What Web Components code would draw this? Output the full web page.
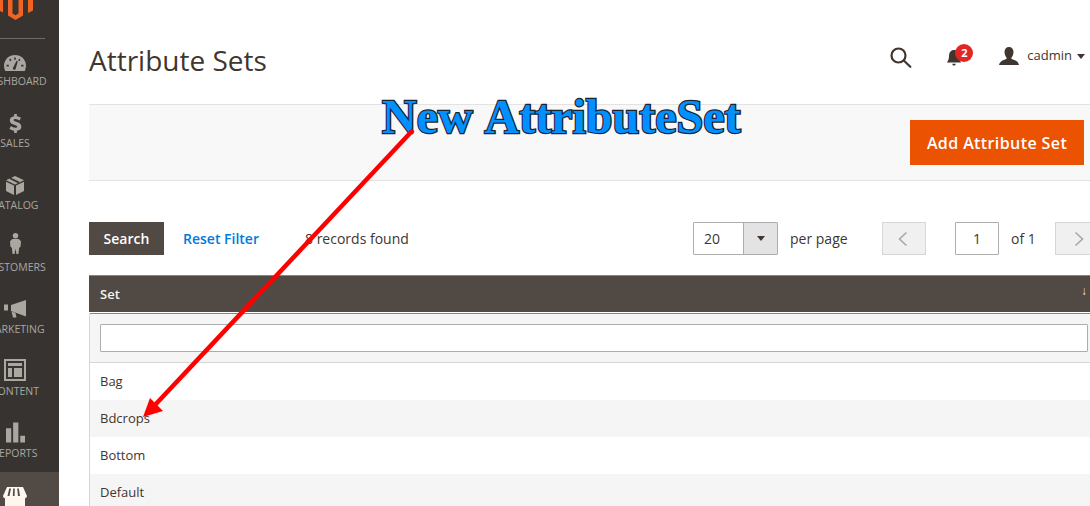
<!DOCTYPE html>
<html lang="en">
<head>
<meta charset="utf-8">
<title>Attribute Sets</title>
<style>
  html, body { margin: 0; height: 506px; overflow: hidden; background: #fff; }
  body { font-family: "Open Sans", sans-serif; color: #41362f; }
  #app { display: flex; width: 1090px; height: 506px; overflow: hidden; position: relative; }
</style>
</head>
<body>
<div id="app">
  <admin-sidebar>
    <nav-item label="DASHBOARD" icon="dashboard"></nav-item>
    <nav-item label="SALES" icon="sales"></nav-item>
    <nav-item label="CATALOG" icon="catalog"></nav-item>
    <nav-item label="CUSTOMERS" icon="customers"></nav-item>
    <nav-item label="MARKETING" icon="marketing"></nav-item>
    <nav-item label="CONTENT" icon="content"></nav-item>
    <nav-item label="REPORTS" icon="reports"></nav-item>
    <nav-item label="STORES" icon="stores" active></nav-item>
  </admin-sidebar>
  <page-main>
    <page-header title="Attribute Sets"></page-header>
    <action-bar label="Add Attribute Set"></action-bar>
    <grid-toolbar></grid-toolbar>
    <data-grid>
      <grid-row>Bag</grid-row>
      <grid-row alt>Bdcrops</grid-row>
      <grid-row>Bottom</grid-row>
      <grid-row alt>Default</grid-row>
    </data-grid>
  </page-main>
  <arrow-note text="New AttributeSet"></arrow-note>
</div>

<script>
const ICONS = {
  dashboard: `<svg width="22" height="16" viewBox="0 0 22 16"><path fill="#aaa6a0" d="M11 0C4.900 0 0 4.700 0 10.600c0 1.900.4 3.700 1.200 5.400h19.600c.8-1.700 1.200-3.500 1.200-5.400C22 4.700 17.100 0 11 0z"/><path fill="#373330" d="M10.200 2.500h1.600v2.200h-1.600zM5 4.500l1.300-1 1.300 1.700-1.300 1zM2.500 9.800h2.300v1.700H2.500zM17.200 9.800h2.300v1.700h-2.300zM15.200 3.700l1.400 1-1.200 1.600-1.300-1zM8.800 13.200l3.800-7.400 1.200.6-2.300 7.800a1.500 1.500 0 0 1-2.700-1z"/></svg>`,
  sales: `<svg width="13" height="19" viewBox="0 0 14 21"><path fill="#aaa6a0" d="M5.500 0h3v2.500c1.800.2 3.300.8 4.500 1.700l-1.500 3C10 6.200 8.500 5.600 7 5.600c-1.300 0-2 .5-2 1.200 0 2 8.500 1.300 8.500 7 0 2.700-1.900 4.400-5 4.800V21h-3v-2.400c-2-.2-3.800-1-5.200-2.200l1.700-3c1.300 1.100 3 1.900 4.700 1.900 1.500 0 2.300-.5 2.300-1.400C9 11.800.7 12.700.7 7c0-2.500 1.800-4.200 4.800-4.500z"/></svg>`,
  catalog: `<svg width="18" height="19" viewBox="0 0 18 19"><path fill="#aaa6a0" d="M9 0l9 4.300-9 4.200L0 4.300zM0 5.800l8 3.800V19l-8-4zM18 5.800l-8 3.800V19l8-4z"/><path fill="none" stroke="#373330" stroke-width="1.800" d="M4 2.300l9 4.300"/></svg>`,
  customers: `<svg width="11" height="23" viewBox="0 0 12 23" style="margin-bottom:2px"><circle cx="6" cy="3" r="3" fill="#aaa6a0"/><path fill="#aaa6a0" d="M2.500 6.500h7L12 9l-.5 6-1.500 1-.8 7H7l-1-6-1 6H2.800L2 16 .5 15 0 9z"/></svg>`,
  marketing: `<svg width="22" height="18" viewBox="0 0 22 18" style="margin-bottom:1px"><path fill="#aaa6a0" d="M22 0v16.500L7 11V5zM0 4.500h4v6H0zM7.500 11.500l4 1.500 1 4.500H9z"/></svg>`,
  content: `<svg width="22" height="22" viewBox="0 0 22 22"><path fill="#aaa6a0" fill-rule="evenodd" d="M0 0h22v22H0zM2 2v18h18V2zM4 4h14v3H4zM4 9h4v9H4zM10 9h8v9h-8z"/></svg>`,
  reports: `<svg width="19" height="21" viewBox="0 0 20 21"><path fill="#aaa6a0" d="M0 6h5.500v15H0zM7.500 0h5.500v21H7.500zM15 14h5v7h-5z"/></svg>`,
  stores: `<svg width="24" height="32" viewBox="0 0 24 32"><path fill="#fff7ee" d="M2 9h20v23H2z"/><path fill="#fff7ee" d="M4 0h16l4 9c0 1.500-1.500 2.500-2.800 2.500S18.300 10.500 18 9c0 1.500-1.600 2.500-3 2.500S12.300 10.500 12 9c-.3 1.500-1.600 2.500-3 2.500S6.300 10.500 6 9c-.3 1.500-1.800 2.500-3.200 2.500S0 10.500 0 9z"/><path fill="#524a45" d="M6.200 1.500h1.800L6.500 9H4.500zM10.200 1.500h1.600L11.600 9H9.800zM15.800 1.500h-1.600L15 9h2z"/></svg>`
};

class AdminSidebar extends HTMLElement {
  constructor() {
    super();
    this.attachShadow({ mode: "open" });
    this.shadowRoot.innerHTML = `
    <style>
      :host {
        display: block;
        flex: 0 0 59px;
        width: 59px;
        height: 506px;
        background: #373330;
        overflow: hidden;
      }
      .logo {
        display: block;
      }
      .rule {
        height: 1px;
        width: 45px;
        margin-top: 18px;
        background: #736963;
      }
      .items {
        display: flex;
        flex-direction: column;
        margin-left: -29px;
        width: 88px;
        padding-top: 9px;
      }
    </style>
    <svg class="logo" width="36" height="20" viewBox="0 0 36 20">
      <path fill="#f26322" d="M0 0h3v12.500L0 11zM8 0h4.500v13.500l3 1.700 3-1.700V0H23v15.500L15.500 20 8 15.500zM28 0h5v10.500L28 13z"/>
    </svg>
    <div class="rule"></div>
    <div class="items"><slot></slot></div>
    `;
  }
}

class NavItem extends HTMLElement {
  constructor() {
    super();
    this.attachShadow({ mode: "open" });
  }

  connectedCallback() {
    const active = this.hasAttribute("active");
    this.shadowRoot.innerHTML = `
    <style>
      :host {
        display: flex;
        flex-direction: column;
        align-items: center;
        height: ${active ? "72px" : "62px"};
        margin-top: ${active ? "-10px" : "0"};
        box-sizing: border-box;
        background: ${active ? "#524a45" : "transparent"};
        padding-top: ${active ? "15px" : "0"};
      }
      .icon {
        height: ${active ? "32px" : "24px"};
        box-sizing: border-box;
        padding-bottom: ${active ? "0" : "1px"};
        display: flex;
        align-items: flex-end;
        justify-content: center;
      }
      .label {
        font: 400 10.500px/14px "Open Sans", sans-serif;
        color: #aaa6a0;
        margin-top: 2px;
        white-space: nowrap;
      }
      svg { display: block; flex: none; }
    </style>
    <div class="icon">${ICONS[this.getAttribute("icon")]}</div>
    <div class="label">${this.getAttribute("label")}</div>
    `;
  }
}

class PageMain extends HTMLElement {
  constructor() {
    super();
    this.attachShadow({ mode: "open" });
    this.shadowRoot.innerHTML = `
    <style>
      :host {
        display: block;
        flex: 0 0 auto;
        width: 1040px;
        margin-left: 30px;
      }
    </style>
    <slot></slot>
    `;
  }
}

class PageHeader extends HTMLElement {
  constructor() {
    super();
    this.attachShadow({ mode: "open" });
  }

  connectedCallback() {
    this.shadowRoot.innerHTML = `
    <style>
      :host {
        display: flex;
        align-items: flex-start;
        height: 104px;
        box-sizing: border-box;
        width: 996px;
      }
      h1 {
        margin: 41px 0 0;
        font: 400 28px/38px "Open Sans", sans-serif;
        color: #41362f;
        flex: 1;
      }
      .actions {
        display: flex;
        align-items: flex-start;
        padding-top: 46px;
      }
      .search { margin: 1px 33px 0 0; display: block; }
      .bell { position: relative; width: 18px; height: 18px; margin: 3px 36px 0 0; }
      .bell svg { display: block; }
      .badge {
        position: absolute;
        left: 10px;
        top: -5px;
        width: 18px;
        height: 18px;
        border-radius: 50%;
        background: #e22626;
        color: #fff;
        font: 700 11px/18px "Open Sans", sans-serif;
        text-align: center;
      }
      .user { display: block; margin: 1px 8px 0 0; }
      .name { margin-top: -1px; font: 400 13px/20px "Open Sans", sans-serif; color: #41362f; }
      .caret {
        width: 0;
        height: 0;
        margin: 8px 0 0 5px;
        border-left: 4px solid transparent;
        border-right: 4px solid transparent;
        border-top: 5px solid #41362f;
      }
    </style>
    <h1>${this.getAttribute("title")}</h1>
    <div class="actions">
      <svg class="search" width="22" height="21" viewBox="0 0 22 21" fill="none" stroke="#41362f" stroke-width="2.200">
        <circle cx="8.500" cy="8.500" r="7"/><path d="M13.800 13.500l6.500 6.300" stroke-linecap="round"/>
      </svg>
      <div class="bell">
        <svg width="18" height="18" viewBox="0 0 18 20"><path fill="#41362f" d="M9 1c3.500 0 5.500 2.800 5.500 6.500 0 4 1 5.500 2.500 7.500H1c1.500-2 2.500-3.500 2.500-7.500C3.500 3.800 5.500 1 9 1zM7 16.500h4a2 2 0 0 1-4 0z"/></svg>
        <div class="badge">2</div>
      </div>
      <svg class="user" width="20" height="18" viewBox="0 0 20 18"><path fill="#41362f" d="M10 0c2.800 0 4.500 2 4.500 5S13 10 12.300 11c0 1 .7 1.300 3 2 2.500.9 4.200 2.500 4.700 5H0c.5-2.500 2.200-4.100 4.700-5 2.300-.7 3-1 3-2C7 10 5.500 8 5.500 5S7.200 0 10 0z"/></svg>
      <span class="name">cadmin</span>
      <span class="caret"></span>
    </div>
    `;
  }
}

class ActionBar extends HTMLElement {
  constructor() {
    super();
    this.attachShadow({ mode: "open" });
  }

  connectedCallback() {
    this.shadowRoot.innerHTML = `
    <style>
      :host {
        display: flex;
        justify-content: flex-end;
        align-items: flex-start;
        box-sizing: border-box;
        height: 77px;
        width: 1001px;
        padding: 15px 6px 0 0;
        background: #f8f8f8;
        border-top: 1px solid #e3e3e3;
        border-bottom: 1px solid #e3e3e3;
      }
      button {
        width: 174px;
        height: 45px;
        border: 0;
        padding: 0;
        background: #eb5202;
        color: #fff;
        font: 600 16px/22px "Open Sans", sans-serif;
        letter-spacing: .4px;
      }
    </style>
    <button>${this.getAttribute("label")}</button>
    `;
  }
}

class GridToolbar extends HTMLElement {
  constructor() {
    super();
    this.attachShadow({ mode: "open" });
    this.shadowRoot.innerHTML = `
    <style>
      :host {
        display: flex;
        align-items: center;
        height: 33px;
        margin-top: 41px;
        width: 1040px;
        font: 400 14px/20px "Open Sans", sans-serif;
        color: #41362f;
      }
      .search {
        width: 75px;
        height: 33px;
        border: 0;
        padding: 0;
        background: #514943;
        color: #fff;
        font: 600 14px/20px "Open Sans", sans-serif;
      }
      .reset { margin-left: 19px; width: 122px; color: #007bdb; font-weight: 600; }
      .count { width: 388px; }
      .select {
        display: flex;
        box-sizing: border-box;
        width: 85px;
        height: 33px;
        border: 1px solid #adadad;
        border-radius: 1px;
      }
      .value { flex: 1; padding-left: 10px; line-height: 31px; }
      .drop {
        display: flex;
        align-items: center;
        justify-content: center;
        width: 33px;
        background: #e3e3e3;
        border-left: 1px solid #adadad;
      }
      .drop i {
        border-left: 4px solid transparent;
        border-right: 4px solid transparent;
        border-top: 5px solid #41362f;
      }
      .per { margin-left: 12px; width: 92px; }
      .page {
        box-sizing: border-box;
        flex: 0 0 44px;
        height: 33px;
        display: flex;
        align-items: center;
        justify-content: center;
        background: #f0f0f0;
        border: 1px solid #d6d6d6;
      }
      .page.prev svg { margin-right: 2px; }
      .page.next svg { margin-left: 4px; }
      .num {
        box-sizing: border-box;
        flex: 0 0 44px;
        height: 33px;
        margin-left: 29px;
        border: 1px solid #adadad;
        border-radius: 1px;
        line-height: 31px;
        text-align: center;
      }
      .of { margin-left: 12px; width: 44px; }
    </style>
    <button class="search">Search</button>
    <span class="reset">Reset Filter</span>
    <span class="count">8 records found</span>
    <div class="select">
      <span class="value">20</span>
      <span class="drop"><i></i></span>
    </div>
    <span class="per">per page</span>
    <span class="page prev"><svg width="10" height="16" viewBox="0 0 10 16" fill="none" stroke="#a8a8a8" stroke-width="1.600"><path d="M8.500 1.500 1.500 8l7 6.500"/></svg></span>
    <span class="num">1</span>
    <span class="of">of 1</span>
    <span class="page next"><svg width="10" height="16" viewBox="0 0 10 16" fill="none" stroke="#a8a8a8" stroke-width="1.600"><path d="M1.500 1.500 8.500 8l-7 6.500"/></svg></span>
    `;
  }
}

class DataGrid extends HTMLElement {
  constructor() {
    super();
    this.attachShadow({ mode: "open" });
    this.shadowRoot.innerHTML = `
    <style>
      :host {
        display: block;
        width: 1040px;
        margin-top: 20px;
        box-sizing: border-box;
        border-left: 1px solid #d6d6d6;
      }
      .head {
        display: flex;
        align-items: center;
        justify-content: space-between;
        box-sizing: border-box;
        height: 38px;
        padding: 0 42px 0 11px;
        background: #514943;
        border-top: 1px solid #8a837f;
        border-bottom: 1px solid #fff;
        color: #f7f3eb;
        font: 600 13px/18px "Open Sans", sans-serif;
        margin-left: -1px;
      }
      .sort { font-size: 12px; color: #e6e2de; margin-top: -6px; }
      .filter {
        box-sizing: border-box;
        height: 50px;
        padding: 10px 0 0 10px;
        background: #f5f5f5;
        border-top: 1px solid #8a837f;
        border-bottom: 1px solid #d6d6d6;
      }
      .filter div {
        box-sizing: border-box;
        width: 988px;
        height: 28px;
        background: #fff;
        border: 1px solid #adadad;
        border-radius: 1px;
      }
    </style>
    <div class="head"><span>Set</span><span class="sort">↓</span></div>
    <div class="filter"><div></div></div>
    <slot></slot>
    `;
  }
}

class GridRow extends HTMLElement {
  constructor() {
    super();
    this.attachShadow({ mode: "open" });
  }

  connectedCallback() {
    this.shadowRoot.innerHTML = `
    <style>
      :host {
        display: block;
        box-sizing: border-box;
        height: 37px;
        padding: 9px 10px 0;
        background: ${this.hasAttribute("alt") ? "#f5f5f5" : "#fff"};
        font: 400 13px/18px "Open Sans", sans-serif;
        color: #41362f;
      }
    </style>
    <slot></slot>
    `;
  }
}

// screenshot annotation, lies over the whole page
class ArrowNote extends HTMLElement {
  constructor() {
    super();
    this.attachShadow({ mode: "open" });
  }

  connectedCallback() {
    this.shadowRoot.innerHTML = `
    <style>
      :host {
        position: absolute;
        inset: 0;
        pointer-events: none;
      }
      .text {
        position: absolute;
        left: 382px;
        top: 92px;
        font: 700 48px/50px "Liberation Serif", serif;
        word-spacing: 2.500px;
        color: #0090ff;
        -webkit-text-stroke: 2.500px #1a2430;
        paint-order: stroke fill;
        white-space: nowrap;
      }
      svg { position: absolute; left: 0; top: 0; }
    </style>
    <div class="text">${this.getAttribute("text")}</div>
    <svg width="1090" height="506" viewBox="0 0 1090 506">
      <path d="M413 130 155 405" stroke="#ff0000" stroke-width="4.500" fill="none"/>
      <path d="M143 417l7-19 13 13z" fill="#ff0000"/>
    </svg>
    `;
  }
}

customElements.define("admin-sidebar", AdminSidebar);
customElements.define("nav-item", NavItem);
customElements.define("page-main", PageMain);
customElements.define("page-header", PageHeader);
customElements.define("action-bar", ActionBar);
customElements.define("grid-toolbar", GridToolbar);
customElements.define("data-grid", DataGrid);
customElements.define("grid-row", GridRow);
customElements.define("arrow-note", ArrowNote);
</script>
</body>
</html>
